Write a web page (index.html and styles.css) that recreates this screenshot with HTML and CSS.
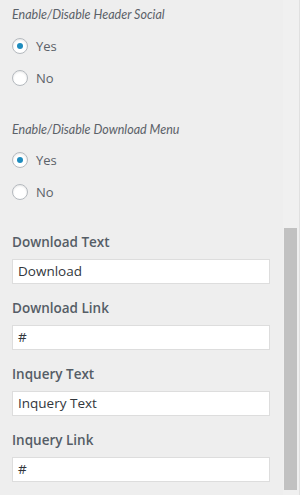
FILE: index.html
```html
<!DOCTYPE html>
<html lang="en">
<head>
    <meta charset="UTF-8">
    <meta name="viewport" content="width=device-width, initial-scale=1.0">
    <title>Header Options</title>
    <link rel="stylesheet" href="styles.css">
</head>
<body>
    <div class="panel">
        <div class="control control-radio">
            <span class="description">Enable/Disable Header Social</span>
            <label class="radio-row"><span class="radio checked"></span>Yes</label>
            <label class="radio-row"><span class="radio"></span>No</label>
        </div>

        <div class="control control-radio second">
            <span class="description">Enable/Disable Download Menu</span>
            <label class="radio-row"><span class="radio checked"></span>Yes</label>
            <label class="radio-row"><span class="radio"></span>No</label>
        </div>

        <div class="control control-text first-text">
            <span class="control-title">Download Text</span>
            <div class="text-input">Download</div>
        </div>
        <div class="control control-text">
            <span class="control-title">Download Link</span>
            <div class="text-input">#</div>
        </div>
        <div class="control control-text">
            <span class="control-title">Inquery Text</span>
            <div class="text-input">Inquery Text</div>
        </div>
        <div class="control control-text">
            <span class="control-title">Inquery Link</span>
            <div class="text-input">#</div>
        </div>
    </div>

    <div class="scrollbar">
        <div class="scroll-thumb"></div>
    </div>
</body>
</html>
```

FILE: styles.css
```css
body {
    margin: 0;
    padding: 0;
    width: 300px;
    height: 495px;
    overflow: hidden;
    position: relative;
    background-color: #eeeeee;
    font-family: "Open Sans", "Noto Sans", sans-serif;
    color: #555d66;
}
.panel {
    padding: 6px 30px 0 12px;
}
.control {
    display: flex;
    flex-direction: column;
}
.description {
    font-family: Lato, "Open Sans", sans-serif;
    font-style: italic;
    font-size: 12.5px;
    line-height: 18px;
    color: #5b6168;
    margin-bottom: 6px;
}
.radio-row {
    display: flex;
    align-items: center;
    height: 32px;
    font-size: 13px;
    color: #5b6168;
}
.radio {
    width: 14px;
    height: 14px;
    border: 1px solid #b4b9be;
    border-radius: 50%;
    background-color: #fff;
    box-shadow: inset 0 1px 2px rgba(0, 0, 0, 0.1);
    margin-right: 8px;
    display: flex;
    align-items: center;
    justify-content: center;
}
.radio.checked::after {
    content: "";
    width: 6px;
    height: 6px;
    border-radius: 50%;
    background-color: #1e8cbe;
}
.second {
    margin-top: 27px;
}
.second .description {
    margin-bottom: 5px;
}
.control-text {
    margin-top: 15px;
}
.first-text {
    margin-top: 25px;
}
.control-title {
    font-size: 13.5px;
    font-weight: 600;
    line-height: 18px;
    margin-bottom: 8px;
}
.text-input {
    height: 23px;
    line-height: 23px;
    border: 1px solid #dddddd;
    background-color: #fff;
    padding: 0 5px;
    font-size: 13.5px;
    color: #32373c;
    width: 246px;
}
.scrollbar {
    position: absolute;
    top: 0;
    right: 0;
    width: 17px;
    height: 495px;
    background-color: #f0f0f0;
    border-right: 1px solid #e0e0e0;
    box-sizing: border-box;
}
.scroll-thumb {
    position: absolute;
    top: 228px;
    left: 1px;
    width: 13px;
    height: 262px;
    background-color: #c1c1c1;
}
```
